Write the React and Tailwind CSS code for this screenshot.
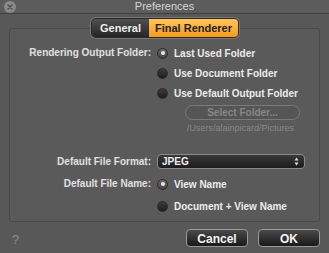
import { useState } from 'react';

const Radio = ({ checked, label, onClick }) => (
  <button onClick={onClick} className="flex items-center gap-[6px] h-[20px] text-left">
    <span
      className={`w-[11px] h-[11px] rounded-full border border-[#2a2a2a] flex items-center justify-center ${
        checked ? 'bg-gradient-to-b from-[#6a6a6a] to-[#444]' : 'bg-gradient-to-b from-[#3c3c3c] to-[#1e1e1e]'
      }`}
    >
      {checked && <span className="w-[4px] h-[4px] rounded-full bg-[#e8e8e8]" />}
    </span>
    <span className="text-[#ececec]">{label}</span>
  </button>
);

export default function App() {
  const [tab, setTab] = useState('final');
  const [folder, setFolder] = useState('last');
  const [fileName, setFileName] = useState('view');

  return (
    <div
      className="w-[329px] h-[253px] bg-[#585858] flex flex-col text-[10px] font-bold"
      style={{ fontFamily: '"Liberation Sans", Arial, sans-serif' }}
    >
      {/* Title bar */}
      <div className="relative h-[14px] flex items-center justify-center border-b border-[#3e3e3e] bg-[#5c5c5c]">
        <span className="absolute left-[4px] top-[1px] w-[12px] h-[12px] rounded-full bg-[#8a8a8a] flex items-center justify-center">
          <svg width="6" height="6" viewBox="0 0 6 6">
            <path d="M1 1L5 5M5 1L1 5" stroke="#4a4a4a" strokeWidth="1.4" strokeLinecap="round" />
          </svg>
        </span>
        <span className="text-[11px] font-normal text-[#d6d6d6]">Preferences</span>
      </div>

      {/* Panel */}
      <div className="relative mx-[9px] mt-[14px] h-[194px] border border-[#4a4a4a] rounded-[3px] bg-[#5a5a5a]">
        <div className="absolute -top-[11px] left-[81px] flex h-[20px] rounded-[5px] border border-[#2a2a2a] overflow-hidden text-[11px] shadow-[0_0_0_1px_#777]">
          <button
            onClick={() => setTab('general')}
            className={`w-[57px] flex items-center justify-center ${
              tab === 'general'
                ? 'bg-gradient-to-b from-[#ffc55a] to-[#f59a16] text-[#222]'
                : 'bg-gradient-to-b from-[#505050] to-[#262626] text-[#eee]'
            }`}
          >
            General
          </button>
          <button
            onClick={() => setTab('final')}
            className={`w-[89px] flex items-center justify-center ${
              tab === 'final'
                ? 'bg-gradient-to-b from-[#ffc55a] to-[#f59a16] text-[#222]'
                : 'bg-gradient-to-b from-[#505050] to-[#262626] text-[#eee]'
            }`}
          >
            Final Renderer
          </button>
        </div>

        <div className="pt-[14px] grid grid-cols-[141px_1fr] gap-x-[6px]">
          <div className="text-right text-[#e0e0e0] h-[20px] leading-[20px]">Rendering Output Folder:</div>
          <div className="flex flex-col">
            <Radio checked={folder === 'last'} label="Last Used Folder" onClick={() => setFolder('last')} />
            <Radio checked={folder === 'doc'} label="Use Document Folder" onClick={() => setFolder('doc')} />
            <Radio checked={folder === 'default'} label="Use Default Output Folder" onClick={() => setFolder('default')} />
            <div className="ml-[28px] mt-[2px] w-[115px] h-[15px] rounded-full border border-[#7a7a7a] bg-[#555] flex items-center justify-center text-[#878787] text-[10px]">
              Select Folder...
            </div>
            <div className="ml-[30px] mt-[2px] text-[9px] leading-[13px] font-normal text-[#888]">/Users/alainpicard/Pictures</div>
          </div>

          <div className="mt-[19px] text-right text-[#e0e0e0] h-[15px] leading-[15px]">Default File Format:</div>
          <div className="mt-[19px]">
            <div className="w-[148px] h-[15px] rounded-[4px] border border-[#8a8a8a] bg-gradient-to-b from-[#3a3a3a] to-[#1c1c1c] flex items-center justify-between pl-[4px] pr-[5px] text-[#f0f0f0]">
              <span>JPEG</span>
              <svg width="5" height="9" viewBox="0 0 5 9">
                <path d="M2.5 0.5L4.5 3.5H0.5Z M2.5 8.5L4.5 5.5H0.5Z" fill="#ddd" />
              </svg>
            </div>
          </div>

          <div className="mt-[5px] text-right text-[#e0e0e0] h-[20px] leading-[20px]">Default File Name:</div>
          <div className="mt-[5px] flex flex-col gap-[2px]">
            <Radio checked={fileName === 'view'} label="View Name" onClick={() => setFileName('view')} />
            <Radio checked={fileName === 'doc'} label="Document + View Name" onClick={() => setFileName('doc')} />
          </div>
        </div>
      </div>

      {/* Footer */}
      <div className="flex items-center h-[18px] mt-[7px] px-[9px]">
        <span className="ml-[3px] mt-[3px] text-[13px] leading-[13px] font-normal text-[#8c8c8c]">?</span>
        <div className="ml-auto flex gap-[10px] text-[12px]">
          <button className="w-[62px] h-[18px] rounded-[4px] border border-[#999] bg-gradient-to-b from-[#4a4a4a] to-[#1a1a1a] text-[#f4f4f4]">
            Cancel
          </button>
          <button className="w-[62px] h-[18px] rounded-[4px] border border-[#999] bg-gradient-to-b from-[#4a4a4a] to-[#1a1a1a] text-[#f4f4f4]">
            OK
          </button>
        </div>
      </div>
    </div>
  );
}
